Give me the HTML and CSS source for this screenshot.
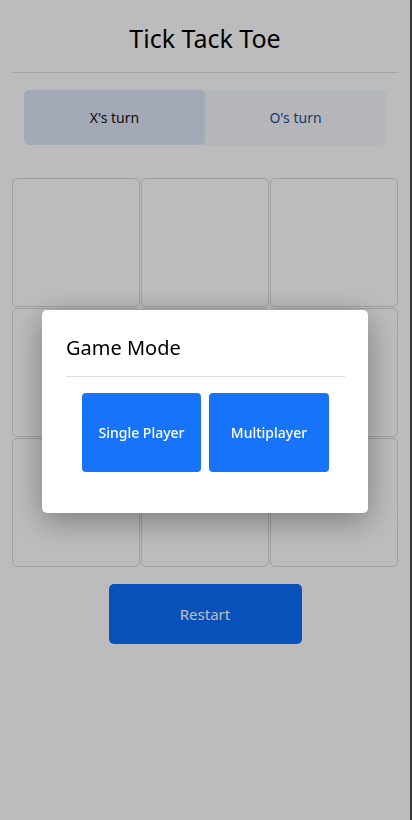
FILE: index.html
```html
<!DOCTYPE html>
<html lang="en">
<head>
<meta charset="utf-8">
<title>Tick Tack Toe</title>
<link rel="stylesheet" href="styles.css">
</head>
<body>
<div class="app">
  <header class="header">
    <h1 class="title">Tick Tack Toe</h1>
  </header>
  <div class="turns">
    <div class="turn turn-active">X's turn</div>
    <div class="turn turn-o">O's turn</div>
  </div>
  <div class="board">
    <div class="cell"></div><div class="cell"></div><div class="cell"></div>
    <div class="cell"></div><div class="cell"></div><div class="cell"></div>
    <div class="cell"></div><div class="cell"></div><div class="cell"></div>
  </div>
  <div class="actions">
    <button class="restart">Restart</button>
  </div>
</div>
<div class="backdrop"></div>
<div class="modal-wrap">
  <div class="modal">
    <h2 class="modal-title">Game Mode</h2>
    <div class="modal-body">
      <button class="mode-btn">Single Player</button>
      <button class="mode-btn">Multiplayer</button>
    </div>
  </div>
</div>
</body>
</html>
```
FILE: styles.css
```css
html {
  background: #4f4f4f;
}
body {
  margin: 0;
  width: 410px;
  min-height: 820px;
  background: #ffffff;
  font-family: "Noto Sans", "Open Sans", sans-serif;
  color: #212529;
}
.app {
  padding: 0 12px;
}
.header {
  height: 72px;
  border-bottom: 1px solid #e0e0e0;
  display: flex;
  align-items: center;
  justify-content: center;
}
.title {
  margin: 0;
  font-size: 25px;
  font-weight: 400;
  color: #000;
  padding-top: 4px;
}
.turns {
  display: flex;
  margin: 17px 12px 0;
  height: 55px;
  border-radius: 5px;
  overflow: hidden;
  background: #f6f7fd;
}
.turn {
  flex: 1;
  display: flex;
  align-items: center;
  justify-content: center;
  font-size: 14px;
}
.turn-active {
  background: #dde6f8;
  border-radius: 5px;
  color: #111;
}
.turn-o {
  color: #264f92;
}
.board {
  margin-top: 33px;
  display: grid;
  grid-template-columns: repeat(3, 128px);
  grid-auto-rows: 129px;
  gap: 1px;
}
.cell {
  border: 1px solid #dadada;
  border-radius: 5px;
}
.actions {
  display: flex;
  justify-content: center;
  margin-top: 17px;
}
.restart {
  width: 193px;
  height: 60px;
  border: none;
  border-radius: 5px;
  background: #0d6efd;
  color: #fff;
  font-family: inherit;
  font-size: 15px;
}
.backdrop {
  position: fixed;
  inset: 0;
  background: rgba(0, 0, 0, 0.263);
}
.modal-wrap {
  position: fixed;
  inset: 0;
  display: flex;
  justify-content: center;
  align-items: flex-start;
  padding-top: 310px;
  padding-right: 2px;
}
.modal {
  width: 326px;
  height: 203px;
  box-sizing: border-box;
  background: #fff;
  border-radius: 5px;
  box-shadow: 0 8px 32px rgba(0, 0, 0, 0.35);
  padding: 0 23px 0 24px;
}
.modal-title {
  margin: 0;
  height: 67px;
  box-sizing: border-box;
  padding-top: 24px;
  font-size: 20px;
  font-weight: 400;
  color: #000;
  border-bottom: 1px solid #dcdcdc;
}
.modal-body {
  display: flex;
  justify-content: center;
  gap: 8px;
  padding-top: 16px;
}
.mode-btn {
  width: 119px;
  height: 79px;
  border: none;
  border-radius: 4px;
  background: #1673fa;
  color: #fff;
  font-family: inherit;
  font-size: 14px;
  font-weight: 500;
}
.mode-btn + .mode-btn {
  width: 120px;
}
```
